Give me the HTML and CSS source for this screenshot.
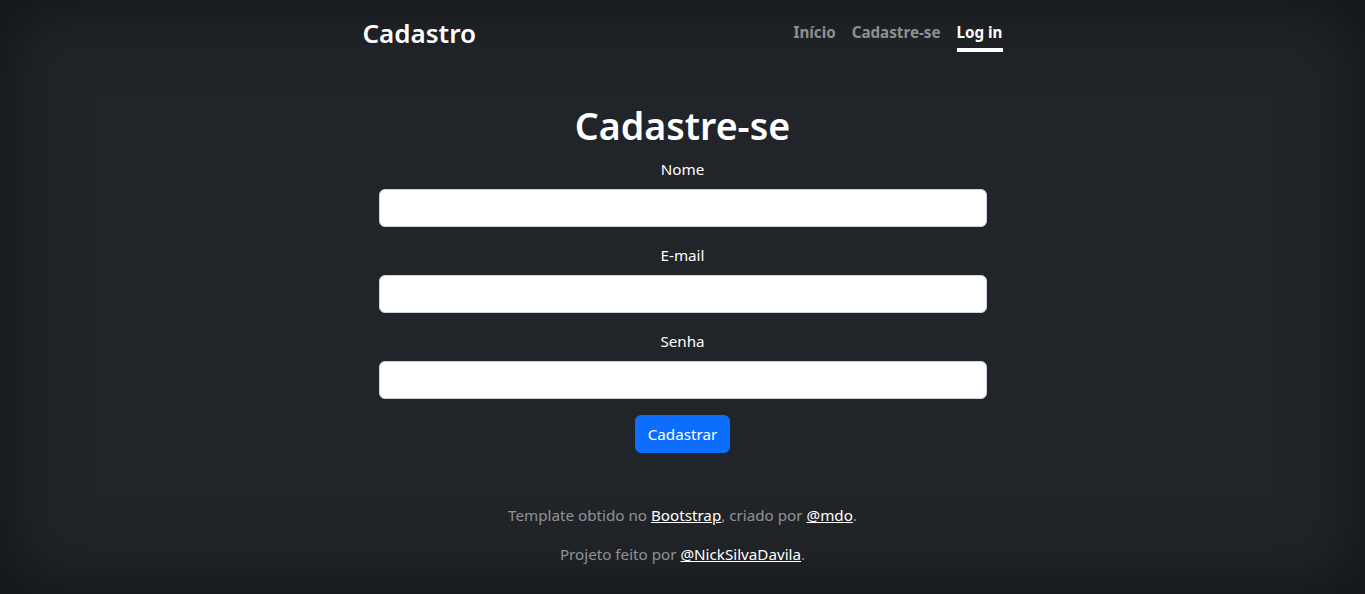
FILE: index.html
```html
<!DOCTYPE html>
<html lang="pt-br">
<head>
<meta charset="utf-8">
<title>Cadastro</title>
<link rel="stylesheet" href="styles.css">
</head>
<body>
<div class="cover">
  <header class="masthead">
    <h3 class="brand">Cadastro</h3>
    <nav class="nav">
      <a class="nav-link" href="#">Início</a>
      <a class="nav-link" href="#">Cadastre-se</a>
      <a class="nav-link active" href="#">Log in</a>
    </nav>
  </header>
  <main class="main">
    <h1 class="title">Cadastre-se</h1>
    <form class="form">
      <div class="field">
        <label class="label" for="nome">Nome</label>
        <input class="input" id="nome" type="text">
      </div>
      <div class="field">
        <label class="label" for="email">E-mail</label>
        <input class="input" id="email" type="email">
      </div>
      <div class="field">
        <label class="label" for="senha">Senha</label>
        <input class="input" id="senha" type="password">
      </div>
      <button class="btn" type="button">Cadastrar</button>
    </form>
  </main>
  <footer class="footer">
    <p>Template obtido no <a href="#">Bootstrap</a>, criado por <a href="#">@mdo</a>.</p>
    <p>Projeto feito por <a href="#">@NickSilvaDavila</a>.</p>
  </footer>
</div>
</body>
</html>
```

FILE: styles.css
```css
* { box-sizing: border-box; }
html, body { height: 100%; }
body {
  margin: 0;
  background: #212529;
  color: #fff;
  font-family: "Noto Sans", "Open Sans", sans-serif;
  font-size: 15.2px;
  line-height: 24px;
  text-align: center;
  box-shadow: inset 0 0 5rem rgba(0, 0, 0, .5);
  overflow: hidden;
}
.cover {
  max-width: 672px;
  margin: 0 auto;
  padding: 16px;
  display: flex;
  flex-direction: column;
}
.masthead {
  display: flex;
  justify-content: space-between;
  align-items: flex-start;
  height: 36px;
  margin-bottom: 49px;
}
.brand {
  margin: 0;
  font-size: 26px;
  font-weight: 600;
  line-height: 34px;
}
.nav { display: flex; }
.nav-link {
  margin-left: 16px;
  padding: 4px 0;
  color: rgba(255, 255, 255, .5);
  font-weight: 700;
  text-decoration: none;
  border-bottom: 4px solid transparent;
}
.nav-link.active {
  color: #fff;
  border-bottom-color: #fff;
}
.main { padding: 0 16px; }
.title {
  margin: 0 0 8px;
  font-size: 37.6px;
  font-weight: 600;
  line-height: 50px;
  height: 48px;
}
.form { display: flex; flex-direction: column; align-items: center; }
.field { width: 100%; margin-bottom: 16px; }
.label { display: block; margin-bottom: 8px; }
.input {
  display: block;
  width: 100%;
  height: 38px;
  padding: 6px 12px;
  font: inherit;
  background: #fff;
  border: 1px solid #ced4da;
  border-radius: 6px;
}
.btn {
  height: 38px;
  padding: 6px 12px;
  font: inherit;
  color: #fff;
  background: #0d6efd;
  border: 1px solid #0d6efd;
  border-radius: 6px;
}
.footer {
  margin-top: 50px;
  color: rgba(255, 255, 255, .5);
}
.footer p { margin: 0 0 15px; }
.footer a { color: #fff; }
```
